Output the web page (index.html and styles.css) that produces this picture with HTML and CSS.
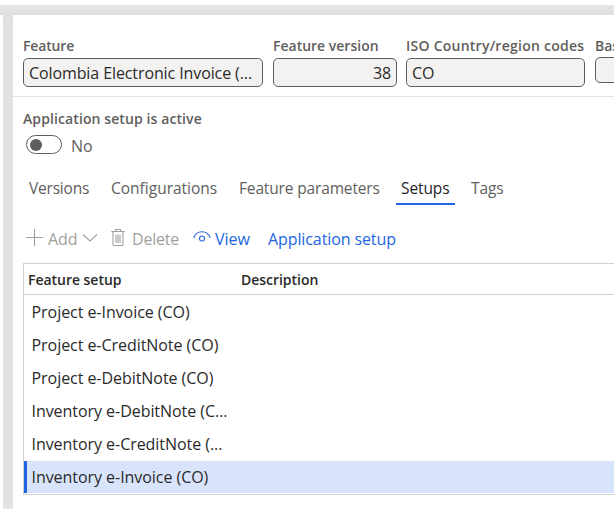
FILE: index.html
```html
<!DOCTYPE html>
<html lang="en">
<head>
<meta charset="utf-8">
<title>Feature setups</title>
<link rel="stylesheet" href="styles.css">
</head>
<body>
<div class="topbar"></div>
<div class="workspace">
  <aside class="side"></aside>
  <main class="panel">
    <section class="fields">
      <div class="field"><label class="feature">Feature</label><div class="input">Colombia Electronic Invoice (...</div></div>
      <div class="field"><label>Feature version</label><div class="input number">38</div></div>
      <div class="field iso-field"><label class="iso">ISO Country/region codes</label><div class="input">CO</div></div>
      <div class="field base"><label>Base</label><div class="input short"></div></div>
    </section>
    <section class="activation">
      <div class="caption">Application setup is active</div>
      <div class="toggle-row"><span class="toggle"><i></i></span><span class="no">No</span></div>
    </section>
    <nav class="tabs">
      <span class="tab versions">Versions</span>
      <span class="tab configurations">Configurations</span>
      <span class="tab parameters">Feature parameters</span>
      <span class="tab active">Setups</span>
      <span class="tab tags">Tags</span>
    </nav>
    <div class="toolbar">
      <span class="action add disabled">
        <svg width="18" height="20" viewBox="0 0 18 20"><path d="M0 8.500h17M8.500 0v17"/></svg>
        <b>Add</b>
        <svg class="chevron" width="16" height="12" viewBox="0 0 16 12"><path d="M1 1.500l7 6.500 7-6.500"/></svg>
      </span>
      <span class="action delete disabled">
        <svg width="14" height="20" viewBox="0 0 14 20"><path d="M.3 2.500h13.400M4.500 2.500v-2h5v2M2 2.500v13q0 1 1 1h8q1 0 1-1v-13M5 5.500v8.500M7 5.500v8.500M9 5.500v8.500"/></svg>
        <b>Delete</b>
      </span>
      <span class="action view">
        <svg width="18" height="16" viewBox="0 0 18 16"><path d="M.8 7C2.200 2.600 5 .8 9 .8S15.800 2.600 17.200 7"/><circle cx="9" cy="7.500" r="2.500"/></svg>
        <b>View</b>
      </span>
      <span class="action application"><b>Application setup</b></span>
    </div>
    <div class="table">
      <div class="head"><span class="name">Feature setup</span><span>Description</span></div>
      <div class="row">Project e-Invoice (CO)</div>
      <div class="row">Project e-CreditNote (CO)</div>
      <div class="row">Project e-DebitNote (CO)</div>
      <div class="row">Inventory e-DebitNote (C...</div>
      <div class="row">Inventory e-CreditNote (...</div>
      <div class="row selected">Inventory e-Invoice (CO)</div>
    </div>
  </main>
</div>
</body>
</html>
```
FILE: styles.css
```css
* { box-sizing: border-box; }
body {
  margin: 0;
  width: 614px;
  height: 509px;
  overflow: hidden;
  background: #e3e2e1;
  color: #2b2a29;
  font: 16px/22px "Segoe UI", "Open Sans", "Noto Sans", sans-serif;
  letter-spacing: -0.1px;
  white-space: nowrap;
}
.topbar { height: 5px; background: #fff; }
.workspace {
  display: flex;
  height: 504px;
  padding-top: 10px;
  background: linear-gradient(#e8e7e6, #dfdedd 10px, #e3e2e1 16px);
}
.side { flex: none; width: 3px; margin-right: 10px; background: #fff; }
.panel { flex: none; width: 601px; overflow: hidden; background: #fff; }
.fields {
  display: grid;
  grid-template-columns: 240px 124px 179px 100px;
  gap: 10px;
  height: 82px;
  padding: 21px 0 0 10px;
  border-bottom: 1px solid #e5e4e3;
}
.iso-field, .base { margin-left: -1px; margin-right: 1px; }
label, .caption {
  display: block;
  height: 22px;
  color: #605e5c;
  font-size: 14px;
  font-weight: 600;
  line-height: 20px;
  letter-spacing: 0;
}
.feature { letter-spacing: -0.15px; }
.iso { letter-spacing: 0.25px; }
.caption { letter-spacing: 0.1px; }
.input {
  height: 29px;
  padding: 0 5px;
  border: 1px solid #605e5c;
  border-radius: 5px;
  background: #f3f2f1;
  line-height: 28px;
  letter-spacing: -0.1px;
}
.base label { height: 21px; }
.short { height: 26px; }
.number { text-align: right; }
.activation { height: 72px; padding: 12px 0 0 10px; }
.toggle-row { display: flex; align-items: center; gap: 9px; height: 29px; margin-left: 3px; color: #605e5c; }
.toggle {
  display: flex;
  align-items: center;
  width: 36px;
  height: 19px;
  margin-top: -2px;
  padding-left: 3px;
  border: 1px solid #605e5c;
  border-radius: 10px;
}
.toggle i { width: 12px; height: 12px; border-radius: 50%; background: #605e5c; }
.tabs { display: flex; height: 36px; padding-left: 16px; color: #605e5c; font-size: 15.5px; line-height: 38px; }
.versions { width: 82px; letter-spacing: -0.2px; }
.configurations { width: 128px; letter-spacing: 0; }
.parameters { width: 157px; letter-spacing: -0.15px; }
.active { width: 59px; margin-right: 16px; padding-left: 5px; border-bottom: 2px solid #2266e3; color: #242322; }
.tags { letter-spacing: -0.1px; }
.toolbar { display: flex; align-items: center; height: 58px; padding: 9px 0 0 13px; color: #2266e3; }
.action { display: flex; align-items: center; height: 24px; }
.action b { font-weight: 400; }
.action svg { flex: none; fill: none; stroke: currentColor; stroke-width: 1.1; }
.disabled { color: #a19f9d; }
.add { gap: 4px; width: 85px; }
.add .chevron { margin-left: 1px; }
.delete { gap: 7px; width: 82px; }
.delete b { letter-spacing: -0.2px; }
.view { gap: 4px; width: 75px; }
.view b { letter-spacing: 0; }
.table { width: 620px; margin-left: 10px; border: 1px solid #d2d0ce; }
.head { display: flex; height: 31px; padding-left: 4px; border-bottom: 1px solid #d2d0ce; font-size: 14px; font-weight: 600; line-height: 31px; letter-spacing: -0.03px; }
.name { width: 213px; }
.row { height: 33px; padding-left: 7.5px; line-height: 34px; letter-spacing: -0.05px; }
.selected { height: 32px; margin: 1px 0; padding-left: 4.5px; border-left: 3px solid #2266e3; background: #d8e4fc; line-height: 32px; }
```
